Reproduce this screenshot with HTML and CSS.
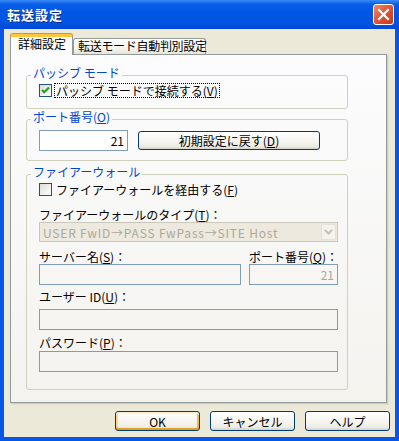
FILE: index.html
```html
<!DOCTYPE html>
<html lang="ja">

<head>
    <meta charset="UTF-8">
    <title>転送設定</title>
    <link rel="stylesheet" href="styles.css">
</head>

<body>
    <div class="window">
        <!-- タイトルバー -->
        <div class="titlebar">
            <span class="title">転送設定</span>
            <span class="close_btn">
                <svg width="21" height="21" viewBox="0 0 21 21">
                    <path d="M6 6 L15 15 M15 6 L6 15" stroke="#fff" stroke-width="2.2" stroke-linecap="square" />
                </svg>
            </span>
        </div>

        <div class="frame">
            <div class="tabs">
                <div class="tab tab_active">詳細設定</div>
                <div class="tab">転送モード自動判別設定</div>
            </div>

            <div class="panel">
                <fieldset class="group group_passive">
                    <legend>パッシブ モード</legend>
                    <div class="check_row">
                        <span class="check_box">
                            <svg width="11" height="11" viewBox="0 0 11 11">
                                <path d="M2 5 L4.2 7.3 L9 2.5" fill="none" stroke="#21A121" stroke-width="2.2" />
                            </svg>
                        </span>
                        <span class="check_text focus">パッシブ モードで接続する(<u>V</u>)</span>
                    </div>
                </fieldset>

                <fieldset class="group group_port">
                    <legend>ポート番号(<u>O</u>)</legend>
                    <div class="port_row">
                        <input class="text_input port_input" type="text" value="21" />
                        <button class="btn btn_reset">初期設定に戻す(<u>D</u>)</button>
                    </div>
                </fieldset>

                <fieldset class="group group_firewall">
                    <legend>ファイアーウォール</legend>
                    <div class="check_row">
                        <span class="check_box"></span>
                        <span class="check_text">ファイアーウォールを経由する(<u>F</u>)</span>
                    </div>

                    <div class="field_label label_type">ファイアーウォールのタイプ(<u>T</u>)：</div>
                    <div class="combo">
                        <span class="combo_text">USER FwID→PASS FwPass→SITE Host</span>
                        <span class="combo_btn">
                            <svg width="9" height="6" viewBox="0 0 9 6">
                                <path d="M1 1 L4.5 4.5 L8 1" fill="none" stroke="#C3C1B4" stroke-width="2" />
                            </svg>
                        </span>
                    </div>

                    <div class="server_row">
                        <div class="server_col">
                            <div class="field_label">サーバー名(<u>S</u>)：</div>
                            <input class="text_input disabled_input" type="text" disabled />
                        </div>
                        <div class="fwport_col">
                            <div class="field_label">ポート番号(<u>Q</u>)：</div>
                            <input class="text_input disabled_input port_input" type="text" value="21" disabled />
                        </div>
                    </div>

                    <div class="field_label label_user">ユーザー ID(<u>U</u>)：</div>
                    <input class="text_input disabled_input wide_input input_user" type="text" disabled />

                    <div class="field_label label_pass">パスワード(<u>P</u>)：</div>
                    <input class="text_input disabled_input wide_input input_pass" type="password" disabled />
                </fieldset>
            </div>

            <div class="buttons">
                <button class="btn btn_dialog btn_default">OK</button>
                <button class="btn btn_dialog">キャンセル</button>
                <button class="btn btn_dialog">ヘルプ</button>
            </div>
        </div>
    </div>
</body>

</html>
```

FILE: styles.css
```css
* {
    box-sizing: border-box;
}

body {
    margin: 0;
    background-color: #ECE9D8;
    font-family: "Noto Sans CJK JP", "Noto Sans", sans-serif;
    font-size: 12px;
    color: #000;
}

u {
    text-decoration: underline;
    text-underline-offset: 1px;
}

.window {
    width: 399px;
    height: 441px;

    display: flex;
    flex-direction: column;
}

/* タイトルバー */
.titlebar {
    height: 29px;
    flex: none;

    display: flex;
    align-items: center;
    justify-content: space-between;
    padding: 0 5px 0 7px;

    background: linear-gradient(#3C8CF6 0px, #0A5EE8 4px, #0057E4 12px, #0054E1 24px, #0046D4 29px);
}

.title {
    color: #fff;
    font-weight: bold;
    font-size: 13px;
    letter-spacing: 1px;
    text-shadow: 1px 1px 0 #0C2A8C;
}

.close_btn {
    width: 21px;
    height: 21px;

    display: flex;
    border: 1px solid #fff;
    border-radius: 3px;
    background: linear-gradient(135deg, #F08A6B, #E2573A 45%, #C4381C);
}

.close_btn svg {
    margin: -1px;
}

/* 本体 */
.frame {
    flex: 1;

    display: flex;
    flex-direction: column;
    padding: 5px 0 0 6px;

    border: 4px solid #0756E6;
    border-top: none;
}

/* タブ */
.tabs {
    height: 20px;

    display: flex;
    align-items: flex-end;
}

.tab {
    height: 16px;
    width: 133px;

    padding: 0 0 0 4px;
    line-height: 14px;
    white-space: nowrap;
    letter-spacing: -0.3px;

    border: 1px solid #919B9C;
    border-bottom: none;
    border-radius: 3px 3px 0 0;
    background: linear-gradient(#FFFFFF, #F3F2EC 70%, #E6E3D7);
}

.tab_active {
    height: 21px;
    width: 63px;
    margin-bottom: -1px;
    z-index: 1;

    padding-left: 7px;
    letter-spacing: 0;

    border-top: 3px solid #FFC83C;
    box-shadow: 0 -1px 0 #E68B2C;
    background: #FCFCFE;
}

.panel {
    width: 377px;
    height: 349px;
    flex: none;

    padding: 11px 0 0 15px;

    border: 1px solid #919B9C;
    background: linear-gradient(#FCFCFE, #F4F3EE);
    box-shadow: 1px 1px 0 #D0CEBF, 2px 2px 0 #E3E0D0;
}

/* グループボックス */
.group {
    width: 322px;
    margin: 0;
    padding: 0 9px 0 12px;

    border: 1px solid #D0D0BF;
    border-radius: 3px;
}

.group legend {
    margin-left: -8px;
    padding: 0 2px 4px;

    line-height: 14px;
    color: #0046D5;
}

.group_passive {
    padding-bottom: 11px;
}

.group_port {
    margin-top: 1px;
    padding-top: 2px;
    padding-bottom: 9px;
}

.group_firewall {
    margin-top: 4px;
    padding-bottom: 17px;
}

/* チェックボックス */
.check_row {
    height: 13px;

    display: flex;
    align-items: center;
}

.check_box {
    width: 13px;
    height: 13px;
    flex: none;

    display: flex;
    align-items: center;
    justify-content: center;

    border: 1px solid #1C5180;
    background: linear-gradient(135deg, #DCDCD7, #FFFFFF);
}

.check_text {
    margin-left: 3px;
    padding: 0 1px;
    line-height: 13px;
    white-space: nowrap;
}

.focus {
    outline: 1px dotted #000;
}

/* 入力欄 */
.text_input {
    height: 21px;

    padding: 0 3px;
    font-family: inherit;
    font-size: 12px;

    border: 1px solid #7F9DB9;
    background-color: #fff;
    outline: none;
}

.port_input {
    width: 89px;
    text-align: right;
}

.disabled_input {
    background-color: transparent;
    color: #ACA899;
}

.wide_input {
    width: 299px;
    display: block;
}

.port_row {
    display: flex;
    align-items: center;
}

.field_label {
    line-height: 14px;
    white-space: nowrap;
}

.label_type {
    margin-top: 12px;
}

/* コンボボックス */
.combo {
    width: 299px;
    height: 20px;

    display: flex;
    align-items: center;
    justify-content: space-between;
    padding: 0 1px 0 3px;

    border: 1px solid #C9C7BA;
    background-color: #EDE9DF;
    color: #ACA899;
}

.combo_text {
    white-space: nowrap;
    letter-spacing: 0.8px;
}

.combo_btn {
    width: 15px;
    height: 16px;

    display: flex;
    align-items: center;
    justify-content: center;

    border: 1px solid #E4E2D7;
    border-radius: 2px;
    background-color: #F4F3EE;
}

.server_row {
    margin-top: 8px;

    display: flex;
    gap: 8px;
}

.server_col .text_input {
    width: 202px;
}

.label_user {
    margin-top: 5px;
}

.input_user {
    margin-top: 5px;
}

.label_pass {
    margin-top: 6px;
}

.input_pass {
    margin-top: 1px;
}

/* ボタン */
.btn {
    height: 19px;

    padding: 0;
    font-family: inherit;
    font-size: 12px;
    color: #000;

    border: 1px solid #003C74;
    border-radius: 3px;
    background: linear-gradient(#FFFFFF, #F4F3EE 60%, #ECEBE6 85%, #D6D0C5);
}

.btn_reset {
    width: 182px;
    margin-left: 10px;
}

.buttons {
    margin-top: 8px;
    padding-right: 5px;

    display: flex;
    justify-content: flex-end;
    gap: 10px;
}

.btn_dialog {
    width: 85px;
    height: 20px;
}

.btn_default {
    box-shadow: inset 0 2px 0 #FFF0CF, inset 0 -2px 0 #E5A01A, inset 2px 0 0 #FBD889, inset -2px 0 0 #F2BA48;
}
```
